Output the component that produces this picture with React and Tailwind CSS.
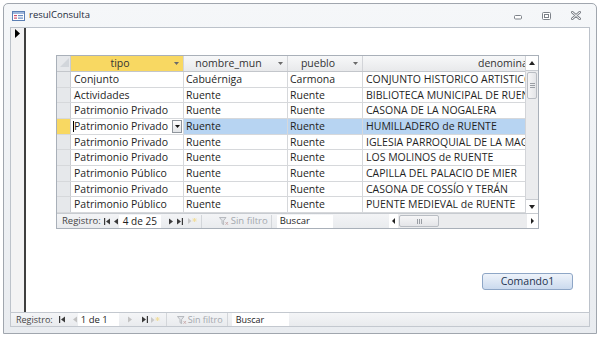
import React from 'react'

const ROWS = [
  ['Conjunto', 'Cabuérniga', 'Carmona', 'CONJUNTO HISTORICO ARTISTICO'],
  ['Actividades', 'Ruente', 'Ruente', 'BIBLIOTECA MUNICIPAL DE RUENTE'],
  ['Patrimonio Privado', 'Ruente', 'Ruente', 'CASONA DE LA NOGALERA'],
  ['Patrimonio Privado', 'Ruente', 'Ruente', 'HUMILLADERO de RUENTE'],
  ['Patrimonio Privado', 'Ruente', 'Ruente', 'IGLESIA PARROQUIAL DE LA MAGDALENA'],
  ['Patrimonio Privado', 'Ruente', 'Ruente', 'LOS MOLINOS de RUENTE'],
  ['Patrimonio Público', 'Ruente', 'Ruente', 'CAPILLA DEL PALACIO DE MIER'],
  ['Patrimonio Privado', 'Ruente', 'Ruente', 'CASONA DE COSSÍO Y TERÁN'],
  ['Patrimonio Público', 'Ruente', 'Ruente', 'PUENTE MEDIEVAL de RUENTE'],
]
const CURRENT = 3

const on = '#3a3a3a'
const off = '#c2c2c2'

function First({ dis }) {
  const c = dis ? off : on
  return (
    <svg width="6" height="7" viewBox="0 0 6 7">
      <rect x="0" y="0" width="1.2" height="7" fill={c} />
      <path d="M6 0.5V6.5L2 3.5Z" fill={c} />
    </svg>
  )
}
function Prev({ dis }) {
  return (
    <svg width="4" height="7" viewBox="0 0 4 7">
      <path d="M4 0.5V6.5L0 3.5Z" fill={dis ? off : on} />
    </svg>
  )
}
function Next({ dis }) {
  return (
    <svg width="4" height="7" viewBox="0 0 4 7">
      <path d="M0 0.5V6.5L4 3.5Z" fill={dis ? off : on} />
    </svg>
  )
}
function Last({ dis }) {
  const c = dis ? off : on
  return (
    <svg width="6" height="7" viewBox="0 0 6 7">
      <path d="M0 0.5V6.5L4 3.5Z" fill={c} />
      <rect x="4.8" y="0" width="1.2" height="7" fill={c} />
    </svg>
  )
}
function NewRec() {
  return (
    <svg width="9" height="8" viewBox="0 0 9 8">
      <path d="M0 1V7L3.5 4Z" fill="#c8c8c8" />
      <path d="M6.5 1V5M4.5 3H8.5M5 1.5L8 4.5M8 1.5L5 4.5" stroke="#f1dc9a" strokeWidth="0.9" />
    </svg>
  )
}
function Funnel() {
  return (
    <svg width="10" height="10" viewBox="0 0 10 10">
      <path d="M0.5 1.5H7L4.6 4.6V8.6L3 7.6V4.6Z" fill="#e4e6ea" stroke="#a9adb3" strokeWidth="0.8" />
      <path d="M6.5 6L9 8.8M9 6L6.5 8.8" stroke="#c9a9a9" strokeWidth="0.9" />
    </svg>
  )
}

function DataNav() {
  return (
    <div className="flex items-center w-[304px] h-full pl-[5px] text-[9.5px] leading-none text-[#454545]">
      <span>Registro:</span>
      <span className="ml-[3px] flex"><First /></span>
      <span className="ml-[4px] flex"><Prev /></span>
      <div className="ml-[1px] w-[42px] h-[13px] bg-white flex items-center pl-[4px] text-[10px] text-[#1e1e1e]">4 de 25</div>
      <span className="ml-[8px] flex"><Next /></span>
      <span className="ml-[4px] flex"><Last /></span>
      <span className="ml-[5px] flex"><NewRec /></span>
      <div className="ml-[4px] h-[13px] border-l border-[#d3d6da]" />
      <span className="ml-[17px] flex"><Funnel /></span>
      <span className="ml-[2px] text-[#a4a8ae]">Sin filtro</span>
      <div className="ml-[3px] h-[13px] border-l border-[#d3d6da]" />
      <div className="ml-[5px] w-[56px] h-[13px] bg-white flex items-center pl-[3px] text-[#1e1e1e]">Buscar</div>
    </div>
  )
}

function HeaderArrow() {
  return (
    <svg width="5" height="3" viewBox="0 0 5 3">
      <path d="M0 0H5L2.5 3Z" fill="#6a6a6a" />
    </svg>
  )
}

function HeadCell({ label, w, yellow }) {
  return (
    <div className={`${w} h-full flex items-center border-r border-[#d2d4d8] ${yellow ? 'bg-[#f8d862]' : 'bg-gradient-to-b from-[#f7f8f9] to-[#e8e9eb]'}`}>
      <span className="flex-1 text-center text-[#333]">{label}</span>
      <span className="w-[14px] flex justify-center"><HeaderArrow /></span>
    </div>
  )
}

function Row({ r, idx }) {
  const cur = idx === CURRENT
  return (
    <div className={`flex h-[16px] border-b border-[#d6d8db] ${cur ? 'bg-[#b7d4f2]' : 'bg-white'}`}>
      <div className={`w-[14px] border-r border-[#c9ccd1] ${cur ? 'bg-[#f8d862]' : 'bg-[#e6e8eb]'}`} />
      <div className={`w-[113px] flex items-center border-r border-[#d6d8db] ${cur ? 'bg-white' : ''}`}>
        {cur && <span className="ml-[2px] w-px h-[11px] bg-black" />}
        <span className={`${cur ? 'pl-0' : 'pl-[3px]'} overflow-hidden whitespace-nowrap flex-1`}>{r[0]}</span>
        {cur && (
          <span className="mr-[1px] w-[10px] h-[13px] border border-[#8f959c] bg-gradient-to-b from-[#fdfdfd] to-[#e2e4e7] flex items-center justify-center">
            <svg width="5" height="3" viewBox="0 0 5 3"><path d="M0 0H5L2.5 3Z" fill="#111" /></svg>
          </span>
        )}
      </div>
      <div className="w-[104px] flex items-center pl-[2px] border-r border-[#d6d8db] overflow-hidden whitespace-nowrap">{r[1]}</div>
      <div className="w-[75px] flex items-center pl-[2px] border-r border-[#d6d8db] overflow-hidden whitespace-nowrap">{r[2]}</div>
      <div className="w-[162px] flex items-center pl-[3px] overflow-hidden whitespace-nowrap">{r[3]}</div>
    </div>
  )
}

function VScroll() {
  return (
    <div className="w-[13px] flex flex-col bg-[#ebecee] border-l border-[#d2d4d8]">
      <div className="h-[15px] bg-white border-b border-[#c9ccd1] flex items-center justify-center">
        <svg width="6" height="4" viewBox="0 0 6 4"><path d="M0 4H6L3 0Z" fill="#222" /></svg>
      </div>
      <div className="mx-[1px] mt-[1px] h-[27px] bg-gradient-to-r from-[#f6f6f7] to-[#e4e5e8] border border-[#b9bdc3] rounded-[2px] flex flex-col items-center justify-center gap-[1px]">
        <span className="w-[5px] h-px bg-[#9a9ea4]" />
        <span className="w-[5px] h-px bg-[#9a9ea4]" />
        <span className="w-[5px] h-px bg-[#9a9ea4]" />
      </div>
      <div className="flex-1" />
      <div className="h-[14px] bg-white border-t border-[#c9ccd1] flex items-center justify-center">
        <svg width="6" height="4" viewBox="0 0 6 4"><path d="M0 0H6L3 4Z" fill="#222" /></svg>
      </div>
    </div>
  )
}

function HScroll() {
  return (
    <div className="ml-[56px] w-[164px] h-full flex items-center bg-[#ebecee]">
      <div className="w-[9px] h-full bg-white flex items-center justify-center">
        <svg width="3" height="6" viewBox="0 0 3 6"><path d="M3 0V6L0 3Z" fill="#222" /></svg>
      </div>
      <div className="ml-[1px] w-[40px] h-[12px] bg-gradient-to-b from-[#f6f6f7] to-[#e4e5e8] border border-[#b9bdc3] rounded-[2px] flex items-center justify-center gap-[1px]">
        <span className="w-px h-[5px] bg-[#9a9ea4]" />
        <span className="w-px h-[5px] bg-[#9a9ea4]" />
        <span className="w-px h-[5px] bg-[#9a9ea4]" />
      </div>
      <div className="flex-1" />
      <div className="w-[11px] h-full bg-white flex items-center justify-center">
        <svg width="3" height="6" viewBox="0 0 3 6"><path d="M0 0V6L3 3Z" fill="#222" /></svg>
      </div>
    </div>
  )
}

function Datasheet() {
  return (
    <div className="ml-[30px] mt-[27px] w-[483px] border border-[#a9b0b9] bg-white flex flex-col text-[10.5px] leading-none text-[#1f1f1f]">
      <div className="flex h-[157px]">
        <div className="flex-1 flex flex-col overflow-hidden">
          <div className="flex h-[16px] border-b border-[#c3c6cb] shrink-0">
            <div className="w-[14px] h-full border-r border-[#c9ccd1] bg-[#e6e8eb] flex items-start justify-end">
              <svg width="9" height="9" viewBox="0 0 9 9" className="mt-[2px] mr-[1px]"><path d="M9 0V9H0Z" fill="#d2d6db" /></svg>
            </div>
            <HeadCell label="tipo" w="w-[113px]" yellow />
            <HeadCell label="nombre_mun" w="w-[104px]" />
            <HeadCell label="pueblo" w="w-[75px]" />
            <div className="w-[162px] h-full flex items-center pl-[115px] bg-gradient-to-b from-[#f7f8f9] to-[#e8e9eb] overflow-hidden whitespace-nowrap text-[#333]">denominación</div>
          </div>
          {ROWS.map((r, i) => (
            <Row key={i} r={r} idx={i} />
          ))}
        </div>
        <VScroll />
      </div>
      <div className="flex h-[15px] bg-gradient-to-b from-[#f3f4f6] to-[#e9ebee] border-t border-[#c7cbd0]">
        <DataNav />
        <HScroll />
        <div className="flex-1 bg-[#ebecee]" />
      </div>
    </div>
  )
}

function FormNav() {
  return (
    <div className="h-[15px] flex items-center pl-[5px] border border-[#c3c8cf] bg-gradient-to-b from-[#f4f5f7] to-[#e9ebee] text-[9px] leading-none text-[#454545]">
      <span>Registro:</span>
      <span className="ml-[6px] flex"><First /></span>
      <span className="ml-[8px] flex"><Prev dis /></span>
      <div className="ml-[1px] w-[41px] h-[13px] bg-white flex items-center pl-[3px] text-[9.5px] text-[#1e1e1e]">1 de 1</div>
      <span className="ml-[9px] flex"><Next dis /></span>
      <span className="ml-[10px] flex"><Last /></span>
      <span className="ml-[3px] flex"><NewRec /></span>
      <div className="ml-[6px] h-[13px] border-l border-[#d3d6da]" />
      <span className="ml-[10px] flex"><Funnel /></span>
      <span className="ml-[1px] text-[#a4a8ae]">Sin filtro</span>
      <div className="ml-[4px] h-[13px] border-l border-[#d3d6da]" />
      <div className="ml-[4px] w-[57px] h-[13px] bg-white flex items-center pl-[4px] text-[#1e1e1e]">Buscar</div>
    </div>
  )
}

function FormIcon() {
  return (
    <svg width="13" height="10" viewBox="0 0 13 10">
      <rect x="0.5" y="0.5" width="12" height="9" fill="#fff" stroke="#5b7fb4" />
      <rect x="1" y="1" width="11" height="2" fill="#9fb7dc" />
      <rect x="2" y="4" width="3" height="1.2" fill="#d0506a" />
      <rect x="2" y="6.5" width="3" height="1.2" fill="#d0506a" />
      <rect x="6" y="4" width="5" height="1.2" fill="#6a8cc0" />
      <rect x="6" y="6.5" width="5" height="1.2" fill="#6a8cc0" />
    </svg>
  )
}

function WinControls() {
  return (
    <div className="ml-auto mr-[15px] flex items-center gap-[20px]">
      <svg width="8" height="5" viewBox="0 0 8 5" className="mt-[4px]">
        <rect x="0.5" y="0.5" width="7" height="3.5" rx="1" fill="#fff" stroke="#7d8289" />
      </svg>
      <svg width="9" height="8" viewBox="0 0 9 8">
        <rect x="0.5" y="0.5" width="8" height="7" rx="1" fill="#fff" stroke="#7d8289" />
        <rect x="2.5" y="2.5" width="4" height="3" fill="none" stroke="#7d8289" />
      </svg>
      <svg width="10" height="9" viewBox="0 0 10 9">
        <path d="M1 1L9 8M9 1L1 8" stroke="#7d8289" strokeWidth="2.6" strokeLinecap="round" />
        <path d="M1 1L9 8M9 1L1 8" stroke="#fff" strokeWidth="1" strokeLinecap="round" />
      </svg>
    </div>
  )
}

export default function App() {
  return (
    <div className="w-[600px] h-[337px] bg-white overflow-hidden font-['Open_Sans',sans-serif]">
      <div className="ml-[3px] mt-[3px] w-[594px] h-[331px] border border-[#a0a6ae] rounded-t-[5px] bg-gradient-to-b from-[#f5f7f9] to-[#e9ecf0] flex flex-col">
        <div className="h-[23px] flex items-center pl-[8px] shrink-0">
          <FormIcon />
          <span className="ml-[4px] text-[9.5px] text-[#1e2a3a]">resulConsulta</span>
          <WinControls />
        </div>
        <div className="h-[285px] mx-[6px] flex border-t border-l border-r border-[#bcc2ca] bg-white">
          <div className="w-[15px] bg-[#f3f3f4] border-r-2 border-[#3f3f3f] flex justify-center">
            <svg width="5" height="9" viewBox="0 0 5 9" className="mt-[1px]"><path d="M0 0V9L5 4.5Z" fill="#000" /></svg>
          </div>
          <div className="flex-1 flex flex-col">
            <Datasheet />
            <button className="self-end mr-[16px] mt-[44px] w-[91px] h-[17px] rounded-[3px] border border-[#8ea6c6] bg-gradient-to-b from-[#eef3fa] to-[#cbdaee] text-[10.5px] leading-none text-[#1e3350]">
              Comando1
            </button>
          </div>
        </div>
        <div className="mx-[6px]">
          <FormNav />
        </div>
      </div>
    </div>
  )
}
